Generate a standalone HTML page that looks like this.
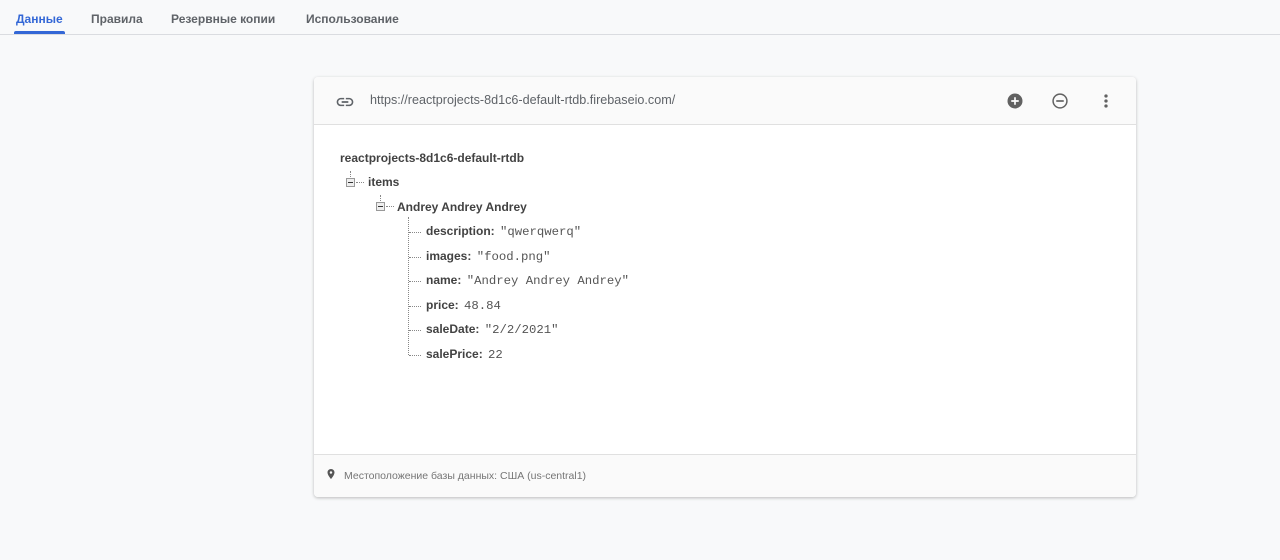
<!DOCTYPE html>
<html><head><style>
body{margin:0;width:1280px;height:560px;background:#f8f9fa;font-family:"Liberation Sans",sans-serif;position:relative;overflow:hidden}
.tabs{position:absolute;left:0;top:0;right:0;height:34px;border-bottom:1px solid #dadce0}
.tab{position:absolute;top:12px;font-size:12px;color:#5f6368;font-weight:bold}
.card{position:absolute;left:314px;top:77px;width:822px;height:420px;background:#fff;border-radius:4px;box-shadow:0 1px 3px rgba(0,0,0,.25)}
.hdr{height:47px;border-bottom:1px solid #e0e0e0;background:#fafafa;border-radius:4px 4px 0 0;position:relative}
.ftr{position:absolute;left:0;right:0;bottom:0;height:42px;border-top:1px solid #e0e0e0;background:#fafafa;border-radius:0 0 4px 4px}
.t{position:absolute;font-size:12px;font-weight:bold;color:#424242;white-space:nowrap}
.v{font-family:"Liberation Mono",monospace;font-weight:normal;color:#555;font-size:12.3px;margin-left:2px}
.box{position:absolute;width:7px;height:7px;border:1px solid #999;background:#eee}
.box:after{content:"";position:absolute;left:1px;top:3px;width:5px;height:1px;background:#333}
.dh{position:absolute;height:0;border-top:1px dotted #888}
.dv{position:absolute;width:0;border-left:1px dotted #888}
</style></head><body>
<div class="tabs">
<div class="tab" style="left:16px;color:#3367d6">Данные</div>
<div style="position:absolute;left:14px;top:31px;width:51px;height:3px;background:#3367d6;border-radius:2px 2px 0 0"></div>
<div class="tab" style="left:91px">Правила</div>
<div class="tab" style="left:171px">Резервные копии</div>
<div class="tab" style="left:306px">Использование</div>
</div>
<div class="card">
<div class="hdr">
<svg style="position:absolute;left:21px;top:15px" width="20" height="20" viewBox="0 0 24 24"><path fill="#5f6368" d="M3.9 12c0-1.71 1.39-3.1 3.1-3.1h4V7H7c-2.76 0-5 2.24-5 5s2.24 5 5 5h4v-1.9H7c-1.71 0-3.1-1.39-3.1-3.1zM8 13h8v-2H8v2zm9-6h-4v1.9h4c1.71 0 3.1 1.39 3.1 3.1s-1.39 3.1-3.1 3.1h-4V17h4c2.76 0 5-2.24 5-5s-2.24-5-5-5z"/></svg>
<div style="position:absolute;left:56px;top:16px;font-size:12.6px;color:#5f6368">https://reactprojects-8d1c6-default-rtdb.firebaseio.com/</div>
<svg style="position:absolute;left:691px;top:14px" width="20" height="20" viewBox="0 0 24 24"><circle cx="12" cy="12" r="9" fill="#616161"/><path d="M12 7.5v9M7.5 12h9" stroke="#fff" stroke-width="2"/></svg>
<svg style="position:absolute;left:736px;top:14px" width="20" height="20" viewBox="0 0 24 24"><circle cx="12" cy="12" r="8.3" fill="none" stroke="#616161" stroke-width="1.8"/><path d="M7.5 12h9" stroke="#616161" stroke-width="2"/></svg>
<svg style="position:absolute;left:782px;top:14px" width="20" height="20" viewBox="0 0 24 24"><circle cx="12" cy="6" r="2" fill="#616161"/><circle cx="12" cy="12" r="2" fill="#616161"/><circle cx="12" cy="18" r="2" fill="#616161"/></svg>
</div>
<div class="t" style="left:26px;top:74px">reactprojects-8d1c6-default-rtdb</div>
<div class="dv" style="left:36px;top:94px;height:6px"></div>
<div class="box" style="left:32px;top:101px"></div>
<div class="dh" style="left:42px;top:105px;width:8px"></div>
<div class="t" style="left:54px;top:98px">items</div>
<div class="dv" style="left:66px;top:118px;height:6px"></div>
<div class="box" style="left:62px;top:125px"></div>
<div class="dh" style="left:72px;top:129px;width:8px"></div>
<div class="t" style="left:83px;top:123px">Andrey Andrey Andrey</div>
<div class="dv" style="left:94px;top:140px;height:138px"></div>
<div class="dh" style="left:95px;top:155px;width:12px"></div>
<div class="t" style="left:112px;top:147px">description: <span class="v">"qwerqwerq"</span></div>
<div class="dh" style="left:95px;top:180px;width:12px"></div>
<div class="t" style="left:112px;top:172px">images: <span class="v">"food.png"</span></div>
<div class="dh" style="left:95px;top:204px;width:12px"></div>
<div class="t" style="left:112px;top:196px">name: <span class="v">"Andrey Andrey Andrey"</span></div>
<div class="dh" style="left:95px;top:229px;width:12px"></div>
<div class="t" style="left:112px;top:221px">price: <span class="v">48.84</span></div>
<div class="dh" style="left:95px;top:253px;width:12px"></div>
<div class="t" style="left:112px;top:245px">saleDate: <span class="v">"2/2/2021"</span></div>
<div class="dh" style="left:95px;top:278px;width:12px"></div>
<div class="t" style="left:112px;top:270px">salePrice: <span class="v">22</span></div>
<div class="ftr">
<svg style="position:absolute;left:11px;top:13px" width="12" height="12" viewBox="0 0 24 24"><path fill="#555" d="M12 2C8.13 2 5 5.13 5 9c0 5.25 7 13 7 13s7-7.75 7-13c0-3.87-3.13-7-7-7zm0 9.5a2.5 2.5 0 110-5 2.5 2.5 0 010 5z"/></svg>
<div style="position:absolute;left:30px;top:15px;font-size:10.5px;color:#757575">Местоположение базы данных: США (us-central1)</div>
</div>
</div>
</body></html>
